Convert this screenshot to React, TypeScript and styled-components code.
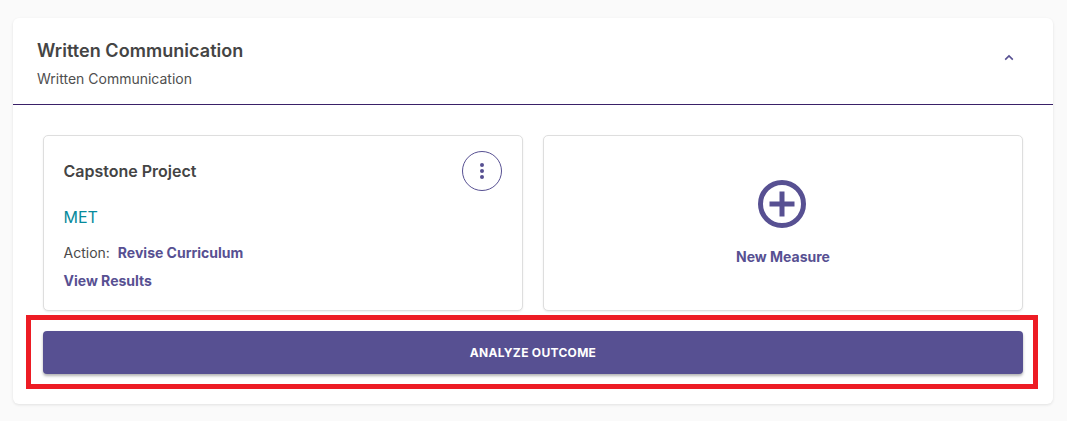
import styled, { createGlobalStyle } from "styled-components";

const GlobalStyle = createGlobalStyle`
  body {
    margin: 0;
    background: #fafafa;
    font-family: Inter, "Liberation Sans", sans-serif;
  }
`;

const Page = styled.div`
  padding: 18px 14px 17px 13px;
`;

const Panel = styled.section`
  background: #fff;
  border-radius: 6px;
  box-shadow: 0 1px 3px rgba(0, 0, 0, 0.1);
`;

const Header = styled.header`
  display: flex;
  align-items: flex-start;
  justify-content: space-between;
  height: 87px;
  box-sizing: border-box;
  padding: 21px 38px 0 24px;
  border-bottom: 1px solid #3a2168;
`;

const Title = styled.h2`
  color: #444444;
  font-size: 18px;
  font-weight: 600;
  letter-spacing: 0.05px;
  line-height: 24px;
  margin: 0 0 4px;
`;

const Subtitle = styled.p`
  color: #4f4f4f;
  font-size: 14px;
  line-height: 24px;
  margin: 0;
`;

const Collapse = styled.svg`
  width: 12px;
  height: 12px;
  margin-top: 13px;
  fill: none;
  stroke: #575092;
  stroke-width: 1.6;
`;

const Body = styled.div`
  position: relative;
  padding: 30px 30px 30px;
`;

const Cards = styled.div`
  display: grid;
  grid-template-columns: 1fr 1fr;
  gap: 20px;
  margin-bottom: 20px;
`;

const Card = styled.article`
  height: 176px;
  box-sizing: border-box;
  background: #fff;
  border: 1px solid #dedede;
  border-radius: 5px;
  box-shadow: 0 1px 2px rgba(0, 0, 0, 0.08);
`;

const MeasureCard = styled(Card)`
  padding: 15px 20px 0 19.5px;
`;

const AddCard = styled(Card)`
  display: flex;
  flex-direction: column;
  align-items: center;
  padding-top: 44px;
`;

const AddIcon = styled.svg`
  width: 50px;
  height: 50px;
  fill: none;
  stroke: #575092;
  stroke-width: 5;
`;

const CardTop = styled.div`
  display: flex;
  align-items: center;
  justify-content: space-between;
`;

const CardTitle = styled.h3`
  color: #444444;
  font-size: 16px;
  font-weight: 600;
  margin: 0;
`;

const MenuButton = styled.button`
  display: flex;
  align-items: center;
  justify-content: center;
  width: 40px;
  height: 40px;
  padding: 0;
  background: #fff;
  border: 1px solid #575092;
  border-radius: 50%;
`;

const Status = styled.div`
  color: #068a9c;
  font-size: 16px;
  line-height: 24px;
  margin-top: 14px;
`;

const ActionRow = styled.div`
  display: flex;
  gap: 8px;
  color: #4a4a4a;
  font-size: 14px;
  line-height: 20px;
  margin-top: 14px;
`;

const StrongLink = styled.a`
  color: #575092;
  font-size: 14px;
  font-weight: 650;
  line-height: 20px;
`;

const ResultsLink = styled(StrongLink)`
  display: block;
  margin-top: 8px;
`;

const AddLabel = styled(StrongLink)`
  margin-top: 17px;
`;

const AnalyzeButton = styled.button`
  display: block;
  width: 100%;
  height: 43px;
  border: 0;
  border-radius: 4px;
  background: #575092;
  color: #fff;
  font-family: inherit;
  font-size: 12px;
  font-weight: 700;
  letter-spacing: 0.3px;
  box-shadow: 0 2px 3px rgba(0, 0, 0, 0.3);
`;

const Highlight = styled.div`
  position: absolute;
  left: 13px;
  right: 15px;
  bottom: 15px;
  height: 74px;
  box-sizing: border-box;
  border: 5px solid #ed1c24;
  pointer-events: none;
`;

const App = () => {
  return (
    <Page>
      <GlobalStyle />
      <Panel>
        <Header>
          <div>
            <Title>Written Communication</Title>
            <Subtitle>Written Communication</Subtitle>
          </div>
          <Collapse viewBox="0 0 12 12">
            <path d="M2.2 7.6 6 3.9l3.8 3.7" />
          </Collapse>
        </Header>
        <Body>
          <Cards>
            <MeasureCard>
              <CardTop>
                <CardTitle>Capstone Project</CardTitle>
                <MenuButton aria-label="More">
                  <svg width="4" height="16" viewBox="0 0 4 16" fill="#575092">
                    <circle cx="2" cy="2" r="2" />
                    <circle cx="2" cy="8" r="2" />
                    <circle cx="2" cy="14" r="2" />
                  </svg>
                </MenuButton>
              </CardTop>
              <Status>MET</Status>
              <ActionRow>
                Action: <StrongLink>Revise Curriculum</StrongLink>
              </ActionRow>
              <ResultsLink>View Results</ResultsLink>
            </MeasureCard>
            <AddCard>
              <AddIcon viewBox="0 0 50 50">
                <circle cx="24" cy="24" r="21.5" />
                <path d="M24 11.5v25M11.5 24h25" />
              </AddIcon>
              <AddLabel>New Measure</AddLabel>
            </AddCard>
          </Cards>
          <AnalyzeButton>ANALYZE OUTCOME</AnalyzeButton>
          <Highlight />
        </Body>
      </Panel>
    </Page>
  );
};

export default App;
